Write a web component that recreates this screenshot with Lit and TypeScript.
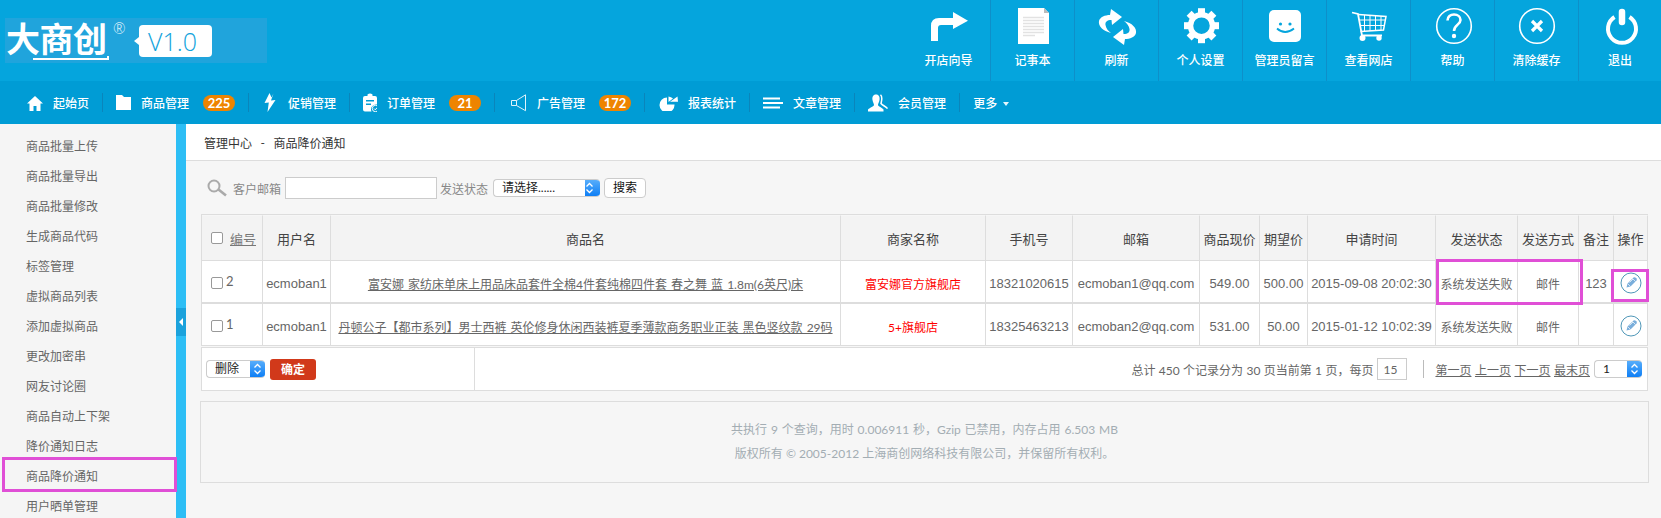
import { LitElement, html, css, svg } from "lit";
import { customElement } from "lit/decorators.js";

const REFRESH = "M14 27C6 25 1 20 2 15 3 11 8 9 13 9L14 3 25 11 15 19 14.500 14C10 14 8 16 8.500 19 9 22 11 25 14 27Z";

const TOP = [
  ["开店向导", svg`<path fill="#fff" d="M2 35V20Q2 12 10 12H24V6L39 14.700 24 23V19H12Q9 19 9 22V35Z"/>`],
  ["记事本", svg`<path fill="#fff" d="M5 2H31L36 7V38H5Z"/><path fill="#bbb" d="M31 2L36 7H31Z"/><path stroke="#e2e2e2" stroke-width="1.600" d="M10 11.500H31M10 14.500H31M10 17.500H31M10 20.500H31M10 23.500H31M10 26.500H31M10 29.500H22"/>`],
  ["刷新", svg`<g fill="#fff"><path d=${REFRESH}/><path transform="rotate(180 20.500 21)" d=${REFRESH}/></g>`],
  ["个人设置", svg`<circle cx="20.500" cy="19.700" r="11" fill="none" stroke="#fff" stroke-width="5.500"/><g fill="#fff">${[0, 45, 90, 135, 180, 225, 270, 315].map((a) => svg`<rect x="17" y="2.200" width="7" height="6" transform="rotate(${a} 20.500 19.700)"/>`)}</g>`],
  ["管理员留言", svg`<rect x="4" y="4" width="32" height="32" rx="5" fill="#fff"/><circle cx="15.500" cy="18" r="1.600" fill="#05a5dd"/><circle cx="25" cy="18" r="1.600" fill="#05a5dd"/><path d="M12 22.500Q20 29.500 29 22.500" fill="none" stroke="#05a5dd" stroke-width="1.800"/>`],
  ["查看网店", svg`<g fill="none" stroke="#fff"><path stroke-width="1.800" d="M3 6.500L9 8 13 29.500H33"/><path stroke-width="1.500" d="M9.500 8.500L37 10.500 34.500 24 11.500 25.500"/><path stroke-width="1" d="M10 14H36M11 19.500H35M15.500 9V25M21 9.500V25M26.500 10V24.500M32 10V24"/></g><circle cx="13.500" cy="32" r="3" fill="#fff"/><circle cx="30" cy="32" r="2.700" fill="#fff"/>`],
  ["帮助", svg`<circle cx="21" cy="20" r="17.300" fill="none" stroke="#fff" stroke-width="1.600"/><path d="M14.500 14.500C14.500 10.500 17.500 8.500 21 8.500 25 8.500 27.500 11 27.500 14 27.500 18.500 21 19 21 25" fill="none" stroke="#fff" stroke-width="2.600"/><circle cx="21" cy="30" r="2.200" fill="#fff"/>`],
  ["清除缓存", svg`<circle cx="20" cy="20" r="17.300" fill="none" stroke="#fff" stroke-width="1.600"/><path d="M15 15L25 25M25 15L15 25" stroke="#fff" stroke-width="3.200"/>`],
  ["退出", svg`<path d="M14.500 11A14 14 0 1 0 29.500 11" fill="none" stroke="#fff" stroke-width="4"/><path d="M22 6V16" stroke="#fff" stroke-width="6.500" stroke-linecap="round"/>`],
];

const NAV: [string, number, number, unknown, string?][] = [
  ["起始页", 16, 16, svg`<path fill="#fff" d="M8 1L16 8.500H13.500V16H9.500V11H6.500V16H2.500V8.500H0Z"/>`],
  ["商品管理", 15, 17, svg`<path fill="#fff" d="M0 1H6L8 3H15V16H0Z"/>`, "225"],
  ["促销管理", 16, 19, svg`<path fill="#fff" d="M7.500 0L2.500 10 6.800 9.500 5.500 19 13.500 7 9 7.500 11.500 0.500 9.500 4.500Z"/>`],
  ["订单管理", 14, 19, svg`<path fill="#fff" fill-rule="evenodd" d="M2 3H4.500V1.500Q7 -0.500 9.500 1.500V3H12Q14 3 14 5V11.500A5 5 0 0 0 8.500 18.500H2Q0 18.500 0 16.500V5Q0 3 2 3ZM3 7V8.500H11V7ZM3 10.500V12H8V10.500Z"/><circle cx="12.500" cy="15.500" r="3.200" fill="none" stroke="#fff" stroke-width="1"/><path d="M11 15.500L12.300 16.800 14.200 14.500" fill="none" stroke="#fff" stroke-width="1"/>`, "21"],
  ["广告管理", 19, 18, svg`<path fill="none" stroke="#dff3fb" stroke-width="1" d="M3.500 6.500H8.500L17.500 0.800V16.700L8.500 11.500H3.500Z"/><path stroke="#dff3fb" stroke-width="1" d="M8.500 6.500V11.500"/>`, "172"],
  ["报表统计", 20, 16, svg`<path fill="#fff" d="M9 2.500A7.500 7.500 0 1 0 16.500 9.500L9 9.500Z"/><path fill="#fff" d="M12 6.800L19.500 1.500 20 6.800Z"/><path fill="#fff" d="M10.500 1.500A8 8 0 0 1 15 3.500L10.500 7Z"/>`],
  ["文章管理", 20, 12, svg`<path fill="#fff" d="M0 0.500H17V2.500H0ZM0 5H20V7H0ZM0 9.500H17V11.500H0Z"/>`],
  ["会员管理", 20, 18, svg`<path fill="#fff" d="M8 0.500C11 0.500 12 3 11.500 6 11 8.500 10 9.500 10 11 10 12.500 14 13.500 15.500 15.500L15.500 17.500H0V15.500C2 13.500 6 12.500 6 11 6 9.500 5 8.500 4.500 6 4 3 5 0.500 8 0.500Z"/><path fill="none" stroke="#fff" stroke-width="1.500" d="M12.500 0.800C15 3 13.500 7 13 9.500 14.500 11.500 18 12.500 19.500 14.500"/>`],
];

const SIDE = ["商品批量上传", "商品批量导出", "商品批量修改", "生成商品代码", "标签管理", "虚拟商品列表", "添加虚拟商品", "更改加密串", "网友讨论圈", "商品自动上下架", "降价通知日志", "商品降价通知", "用户晒单管理"];

const chev = html`<svg width="9" height="14" viewBox="0 0 9 14"><path d="M1.500 5.500L4.500 2.500 7.500 5.500M1.500 8.500L4.500 11.500 7.500 8.500" fill="none" stroke="#fff" stroke-width="1.300"/></svg>`;

const pen = html`<svg class="pen" width="22" height="22" viewBox="0 0 22 22"><circle cx="11" cy="11" r="10" fill="#fff" stroke="#4f97b8" stroke-width="1"/><path d="M6.500 15.500L7.500 11.500 13.500 5.500Q14.500 4.700 15.800 5.800L16.300 6.300Q17.300 7.500 16.500 8.500L10.500 14.500Z" fill="#7aaedb"/><path d="M7.500 11.500L10.500 14.500M12.500 6.500L15.500 9.500M9.500 10.500L13 7" stroke="#fff" stroke-width=".7"/></svg>`;

@customElement("app-root")
export class AppRoot extends LitElement {
  static styles = css`
    :host { display: block; position: relative; height: 518px; overflow: hidden; background: #f6f6f6;
      font-family: Lato, "Noto Sans CJK SC", sans-serif; font-size: 12px; color: #666; }
    * { box-sizing: border-box; }
    .top { display: flex; height: 81px; background: #05a5dd; }
    .logo { position: relative; display: flex; align-items: center; width: 262px; height: 45px; margin: 18px 0 0 5px; background: #20a4dc; color: #fff; }
    .logo-cn { margin: -4px 0 0 1px; width: 104px; font-size: 34px; line-height: 45px; font-weight: 700; white-space: nowrap; letter-spacing: -0.500px; }
    .logo-line { position: absolute; left: 28px; top: 38px; width: 76px; height: 4px; border-bottom: 2px solid #fff; border-right: 2px solid #fff; }
    .reg { font-size: 15px; font-weight: 300; align-self: flex-start; margin: 2px 0 0 3px; line-height: 16px; }
    .bubble { position: absolute; left: 134px; top: 7px; width: 73px; height: 32px; border-radius: 4px; background: #fff; color: #12a3dc; font-size: 25px; font-weight: 300; line-height: 32px; padding-left: 9px; font-family: "Open Sans", sans-serif; }
    .bubble::before { content: ""; position: absolute; left: -5px; top: 12px; border: 4px solid transparent; border-left: 0; border-right: 5px solid #fff; }
    .tools { margin-left: auto; display: flex; }
    .tool { width: 84px; height: 81px; display: flex; flex-direction: column; align-items: center; padding-top: 6px; border-right: 1px solid #0e8fc9; color: #fff; font-weight: 500; }
    .tool:last-child { width: 82px; border-right: 0; }
    .tool span { margin-top: 6px; line-height: 18px; white-space: nowrap; }
    .nav { display: flex; align-items: center; height: 43px; padding-left: 14px; background: #009cd5; color: #fff; font-weight: 500; }
    .item { display: flex; align-items: center; gap: 10px; height: 19px; padding: 0 13px; border-right: 1px solid #0a85bb; white-space: nowrap; }
    .item:last-child { border-right: 0; gap: 6px; }
    .badge { width: 32px; height: 16px; margin-left: 4px; border-radius: 8px; background: #ee8400; font-size: 13px; font-weight: 700; line-height: 16px; text-align: center; }
    .caret { border: 3px solid transparent; border-top: 4px solid #e6f6fc; border-bottom: 0; margin-top: 2px; }
    .body { display: flex; height: 394px; }
    .side { width: 176px; flex: none; padding-top: 8px; background: #f5f5f5; }
    .side div { height: 30px; line-height: 30px; padding-left: 26px; color: #666; }
    .split { position: relative; width: 10px; flex: none; background: #2dbef5; }
    .toggle { position: absolute; left: 0; top: 184px; width: 10px; height: 28px; background: #1ba2dc; display: flex; align-items: center; justify-content: center; }
    .toggle::before { content: ""; border: 4px solid transparent; border-left: 0; border-right: 4px solid #fff; }
    .main { flex: 1; min-width: 0; }
    .crumb { display: flex; align-items: center; gap: 8.500px; height: 37px; padding-left: 18px; background: #fff; border-bottom: 1px solid #ddd; color: #333; }
    .content { padding: 16px 13px 0 15px; }
    .search { display: flex; align-items: center; height: 22px; padding-left: 6px; margin-bottom: 15px; color: #888; }
    .search svg { margin-right: 6px; }
    .search input { width: 152px; height: 22px; margin: 0 3px 0 4px; border: 1px solid #ccc; background: #fff; padding: 0; }
    .sel { display: flex; height: 18px; border: 1px solid #ccc; border-right: 0; border-radius: 4px; overflow: hidden; background: #fff; color: #222; line-height: 16px; }
    .sel b { flex: 1; font-weight: 400; white-space: nowrap; }
    .sel i { width: 15px; flex: none; margin: -1px 0; background: linear-gradient(#5cb0fb, #0a7cf5); display: flex; align-items: center; justify-content: center; }
    .sel-a { width: 107px; margin-left: 5px; padding-left: 8px; }
    .btn { width: 42px; height: 20px; margin-left: 4px; border: 1px solid #ccc; border-radius: 4px; background: #fff; color: #111; line-height: 18px; text-align: center; }
    table { table-layout: fixed; width: 1447px; border-collapse: separate; border-spacing: 0; border-top: 1px solid #ddd; border-left: 1px solid #ddd; }
    th, td { padding: 0; border-right: 1px solid #ddd; border-bottom: 1px solid #ddd; text-align: center; white-space: nowrap; overflow: hidden; }
    th { height: 46px; border-top: 1px solid #f6f6f6; background: #f3f3f3; color: #444; font-size: 13px; font-weight: 400; }
    td { padding-top: 3px; background: #fff; color: #666; }
    .r1 td { height: 43px; border-bottom-width: 2px; }
    .r2 td { height: 42px; }
    td.num { font-family: "Liberation Sans", sans-serif; font-size: 13px; }
    td.name { word-spacing: 1px; }
    .idcell { display: flex; align-items: center; gap: 3px; padding-left: 9px; font-size: 13px; }
    .idcell span { margin-top: -5px; }
    th .idcell { gap: 7px; }
    th .idcell span { margin-top: 0; color: #777; }
    .cb { width: 12px; height: 12px; flex: none; border: 1px solid #999; border-radius: 2px; background: #fff; }
    .red { color: #f00; }
    .pen { display: block; margin: 0 auto; }
    .foot { display: flex; height: 44px; width: 1447px; margin-top: 1px; border: 1px solid #ddd; background: #fff; }
    .foot-l { display: flex; align-items: center; width: 273px; padding-left: 4px; border-right: 1px solid #ddd; }
    .sel-b { width: 59px; padding-left: 8px; }
    .ok { width: 46px; height: 21px; margin-left: 5px; border-radius: 3px; background: #d1391a; color: #fff; line-height: 21px; text-align: center; font-weight: 700; }
    .foot-r { flex: 1; display: flex; align-items: center; justify-content: flex-end; padding-right: 5px; color: #666; white-space: nowrap; }
    .total { word-spacing: 0.300px; }
    .foot-r input { width: 30px; height: 22px; margin-left: 4px; border: 1px solid #ccc; padding: 0 0 0 5px; font: inherit; color: #666; }
    .vr { width: 1px; height: 18px; margin: 0 11px 0 16px; background: #bbb; }
    .links { display: flex; gap: 3.500px; }
    .sel-c { width: 48px; margin-left: 4px; padding-left: 8px; }
    .copy { width: 1449px; height: 82px; margin: 10px 0 0 -1px; padding-top: 16px; border: 1px solid #ddd; text-align: center; color: #a3adb3; line-height: 24px; }
    .copy div:first-child { word-spacing: 0.800px; }
    .mark { position: absolute; border: 3px solid #e04fd6; pointer-events: none; }
    .m1 { left: 2px; top: 457px; width: 175px; height: 35px; }
    .m2 { left: 1436px; top: 259px; width: 147px; height: 46px; }
    .m3 { left: 1611px; top: 269px; width: 38px; height: 33px; }
  `;

  row(cls: string, id: string, name: string, shop: string, phone: string, mail: string, now: string, want: string, time: string, note: string) {
    return html`<tr class=${cls}>
      <td><div class="idcell"><i class="cb"></i><span>${id}</span></div></td>
      <td class="num">ecmoban1</td><td class="name"><u>${name}</u></td><td class="red">${shop}</td><td class="num">${phone}</td><td class="num">${mail}</td>
      <td class="num">${now}</td><td class="num">${want}</td><td class="num">${time}</td><td>系统发送失败</td><td>邮件</td><td class="num">${note}</td><td>${pen}</td>
    </tr>`;
  }

  render() {
    const widths = [61, 68, 510, 145, 87, 127, 60, 48, 128, 82, 61, 35, 34];
    return html`
      <header class="top">
        <div class="logo">
          <span class="logo-cn">大商创</span><i class="logo-line"></i><span class="reg">®</span>
          <span class="bubble">V1.0</span>
        </div>
        <div class="tools">
          ${TOP.map(([t, ic]) => html`<div class="tool"><svg width="40" height="40" viewBox="0 0 40 40">${ic}</svg><span>${t}</span></div>`)}
        </div>
      </header>
      <nav class="nav">
        ${NAV.map(([t, w, h, ic, b]) => html`<div class="item"><svg width=${w} height=${h} viewBox=${`0 0 ${w} ${h}`}>${ic}</svg><span>${t}</span>${b ? html`<span class="badge">${b}</span>` : ""}</div>`)}
        <div class="item"><span>更多</span><i class="caret"></i></div>
      </nav>
      <div class="body">
        <aside class="side">${SIDE.map((s) => html`<div>${s}</div>`)}</aside>
        <div class="split"><div class="toggle"></div></div>
        <main class="main">
          <div class="crumb"><span>管理中心</span><span>-</span><span>商品降价通知</span></div>
          <div class="content">
            <div class="search">
              <svg width="20" height="18" viewBox="0 0 20 18"><circle cx="7" cy="7" r="5.500" fill="none" stroke="#aaa" stroke-width="2"/><path d="M11.500 10.500L19 16.500" stroke="#aaa" stroke-width="2.600"/></svg>
              <span>客户邮箱</span><input /><span>发送状态</span>
              <div class="sel sel-a"><b>请选择......</b><i>${chev}</i></div>
              <div class="btn">搜索</div>
            </div>
            <table>
              <colgroup>${widths.map((w) => html`<col width=${w} />`)}</colgroup>
              <thead><tr>
                <th><div class="idcell"><i class="cb"></i><span><u>编号</u></span></div></th>
                ${["用户名", "商品名", "商家名称", "手机号", "邮箱", "商品现价", "期望价", "申请时间", "发送状态", "发送方式", "备注", "操作"].map((h) => html`<th>${h}</th>`)}
              </tr></thead>
              <tbody>
                ${this.row("r1", "2", "富安娜 家纺床单床上用品床品套件全棉4件套纯棉四件套 春之舞 蓝 1.8m(6英尺)床", "富安娜官方旗舰店", "18321020615", "ecmoban1@qq.com", "549.00", "500.00", "2015-09-08 20:02:30", "123")}
                ${this.row("r2", "1", "丹顿公子【都市系列】男士西裤 英伦修身休闲西装裤夏季薄款商务职业正装 黑色竖纹款 29码", "5+旗舰店", "18325463213", "ecmoban2@qq.com", "531.00", "50.00", "2015-01-12 10:02:39", "")}
              </tbody>
            </table>
            <div class="foot">
              <div class="foot-l"><div class="sel sel-b"><b>删除</b><i>${chev}</i></div><div class="ok">确定</div></div>
              <div class="foot-r">
                <span class="total">总计 450 个记录分为 30 页当前第 1 页，每页</span><input value="15" />
                <i class="vr"></i>
                <div class="links"><u>第一页</u><u>上一页</u><u>下一页</u><u>最末页</u></div>
                <div class="sel sel-c"><b>1</b><i>${chev}</i></div>
              </div>
            </div>
            <div class="copy"><div>共执行 9 个查询，用时 0.006911 秒，Gzip 已禁用，内存占用 6.503 MB</div><div>版权所有 © 2005-2012 上海商创网络科技有限公司，并保留所有权利。</div></div>
          </div>
        </main>
      </div>
      <i class="mark m1"></i><i class="mark m2"></i><i class="mark m3"></i>
    `;
  }
}
